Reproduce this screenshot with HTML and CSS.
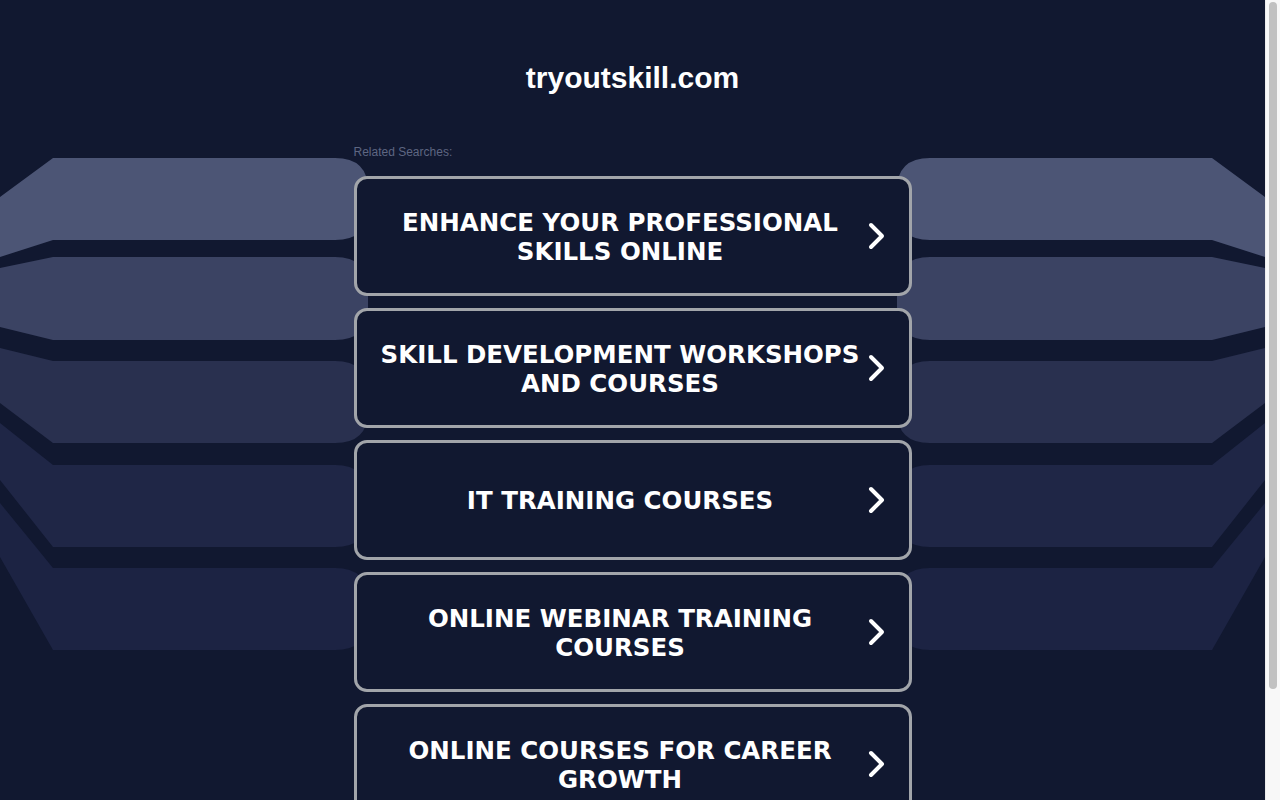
FILE: index.html
```html
<!DOCTYPE html>
<html lang="en">
<head>
<meta charset="utf-8">
<title>tryoutskill.com</title>
<link rel="stylesheet" href="styles.css">
</head>
<body>
<div class="bg" aria-hidden="true">
  <svg class="bands" width="370" height="700" viewBox="0 0 370 700">
    <path fill="#4c5575" d="M0,197 L53,158 L335,158 Q368,158 368,190 L368,208 Q368,240 335,240 L53,240 L0,257 Z"/>
    <path fill="#3b4363" d="M0,268 L53,257 L335,257 Q368,257 368,289 L368,308 Q368,340 335,340 L53,340 L0,327 Z"/>
    <path fill="#29304f" d="M0,348 L53,361 L335,361 Q368,361 368,393 L368,411 Q368,443 335,443 L53,443 L0,403 Z"/>
    <path fill="#1f2646" d="M0,423 L53,465 L335,465 Q368,465 368,497 L368,515 Q368,547 335,547 L53,547 L0,480 Z"/>
    <path fill="#1c2343" d="M0,503 L53,568 L335,568 Q368,568 368,600 L368,618 Q368,650 335,650 L53,650 L0,557 Z"/>
  </svg>
  <svg class="bands mirror" width="370" height="700" viewBox="0 0 370 700">
    <path fill="#4c5575" d="M0,197 L53,158 L335,158 Q368,158 368,190 L368,208 Q368,240 335,240 L53,240 L0,257 Z"/>
    <path fill="#3b4363" d="M0,268 L53,257 L335,257 Q368,257 368,289 L368,308 Q368,340 335,340 L53,340 L0,327 Z"/>
    <path fill="#29304f" d="M0,348 L53,361 L335,361 Q368,361 368,393 L368,411 Q368,443 335,443 L53,443 L0,403 Z"/>
    <path fill="#1f2646" d="M0,423 L53,465 L335,465 Q368,465 368,497 L368,515 Q368,547 335,547 L53,547 L0,480 Z"/>
    <path fill="#1c2343" d="M0,503 L53,568 L335,568 Q368,568 368,600 L368,618 Q368,650 335,650 L53,650 L0,557 Z"/>
  </svg>
</div>
<main class="page">
  <h1 class="domain">tryoutskill.com</h1>
  <p class="related">Related Searches:</p>
  <ul class="links">
    <li><a class="card" href="#"><span class="card-text">ENHANCE YOUR PROFESSIONAL SKILLS ONLINE</span><svg class="chev" width="20" height="28" viewBox="0 0 20 28"><polyline points="4,3 15,14 4,25" fill="none" stroke="#fff" stroke-width="4" stroke-linecap="round" stroke-linejoin="round"/></svg></a></li>
    <li><a class="card" href="#"><span class="card-text">SKILL DEVELOPMENT WORKSHOPS AND COURSES</span><svg class="chev" width="20" height="28" viewBox="0 0 20 28"><polyline points="4,3 15,14 4,25" fill="none" stroke="#fff" stroke-width="4" stroke-linecap="round" stroke-linejoin="round"/></svg></a></li>
    <li><a class="card" href="#"><span class="card-text">IT TRAINING COURSES</span><svg class="chev" width="20" height="28" viewBox="0 0 20 28"><polyline points="4,3 15,14 4,25" fill="none" stroke="#fff" stroke-width="4" stroke-linecap="round" stroke-linejoin="round"/></svg></a></li>
    <li><a class="card" href="#"><span class="card-text">ONLINE WEBINAR TRAINING COURSES</span><svg class="chev" width="20" height="28" viewBox="0 0 20 28"><polyline points="4,3 15,14 4,25" fill="none" stroke="#fff" stroke-width="4" stroke-linecap="round" stroke-linejoin="round"/></svg></a></li>
    <li><a class="card" href="#"><span class="card-text">ONLINE COURSES FOR CAREER GROWTH</span><svg class="chev" width="20" height="28" viewBox="0 0 20 28"><polyline points="4,3 15,14 4,25" fill="none" stroke="#fff" stroke-width="4" stroke-linecap="round" stroke-linejoin="round"/></svg></a></li>
  </ul>
</main>
<div class="scrollbar" aria-hidden="true"><div class="thumb"></div></div>
</body>
</html>
```

FILE: styles.css
```css
html, body {
  margin: 0;
  padding: 0;
}
html {
  background: #111830;
}
body {
  background: #111830;
  font-family: "Liberation Sans", Arial, sans-serif;
  color: #fff;
  position: relative;
  min-height: 930px;
  margin-right: 15px;
}
.bg {
  position: absolute;
  top: 0;
  left: 0;
  right: 0;
  height: 700px;
  display: flex;
  justify-content: space-between;
  pointer-events: none;
  z-index: 0;
}
.bands {
  display: block;
}
.mirror {
  transform: scaleX(-1);
}
.page {
  position: relative;
  z-index: 1;
  width: 558px;
  margin: 0 auto;
  padding: 61px 0 106px;
}
.domain {
  margin: 0;
  font-family: "Liberation Sans", Arial, sans-serif;
  font-weight: bold;
  font-size: 30px;
  line-height: 34px;
  text-align: center;
  color: #fff;
}
.related {
  margin: 50px 0 17px;
  font-size: 12px;
  line-height: 14px;
  color: #5e6682;
}
.links {
  list-style: none;
  margin: 0;
  padding: 0;
  display: flex;
  flex-direction: column;
  gap: 12px;
}
.card {
  box-sizing: border-box;
  height: 120px;
  display: flex;
  align-items: center;
  gap: 2px;
  padding: 1px 22px 0 19px;
  border: 3px solid #a2a5aa;
  border-radius: 13px;
  background: #111830;
  color: #fff;
  text-decoration: none;
}
.card-text {
  flex: 1;
  text-align: center;
  font-family: "DejaVu Sans", Verdana, sans-serif;
  font-weight: bold;
  font-size: 24.5px;
  line-height: 29px;
}
.chev {
  flex: none;
  display: block;
  margin-top: -1px;
}
.scrollbar {
  position: fixed;
  top: 0;
  right: 0;
  width: 15px;
  height: 100vh;
  background: #f8f8f8;
  border-left: 1px solid #ececec;
  box-sizing: border-box;
  z-index: 5;
}
.thumb {
  position: absolute;
  top: 2px;
  left: 3px;
  width: 8px;
  height: 687px;
  border-radius: 4px;
  background: #c1c1c1;
}
```
